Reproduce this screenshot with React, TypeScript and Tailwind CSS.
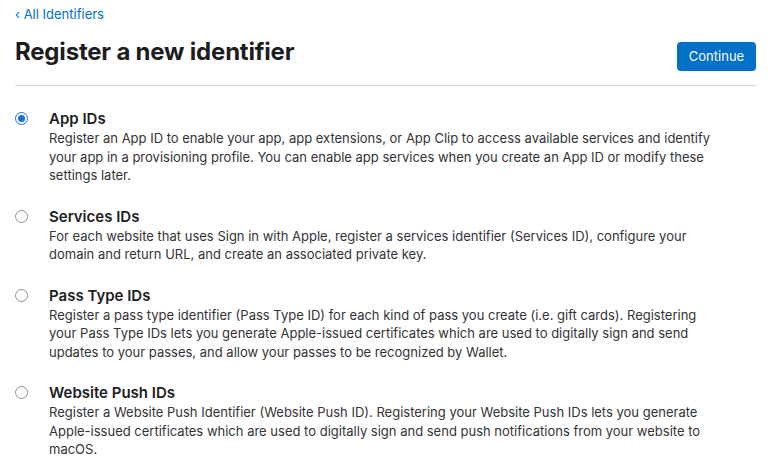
import React, { useState } from "react";

type IdentifierType = {
  id: string;
  title: string;
  lines: string[];
};

const identifierTypes: IdentifierType[] = [
  {
    id: "app",
    title: "App IDs",
    lines: [
      "Register an App ID to enable your app, app extensions, or App Clip to access available services and identify",
      "your app in a provisioning profile. You can enable app services when you create an App ID or modify these",
      "settings later.",
    ],
  },
  {
    id: "services",
    title: "Services IDs",
    lines: [
      "For each website that uses Sign in with Apple, register a services identifier (Services ID), configure your",
      "domain and return URL, and create an associated private key.",
    ],
  },
  {
    id: "pass",
    title: "Pass Type IDs",
    lines: [
      "Register a pass type identifier (Pass Type ID) for each kind of pass you create (i.e. gift cards). Registering",
      "your Pass Type IDs lets you generate Apple-issued certificates which are used to digitally sign and send",
      "updates to your passes, and allow your passes to be recognized by Wallet.",
    ],
  },
  {
    id: "push",
    title: "Website Push IDs",
    lines: [
      "Register a Website Push Identifier (Website Push ID). Registering your Website Push IDs lets you generate",
      "Apple-issued certificates which are used to digitally sign and send push notifications from your website to",
      "macOS.",
    ],
  },
];

// radio circle drawn with plain divs so it looks the same everywhere
const Radio = ({ checked }: { checked: boolean }) => {
  if (checked) {
    return (
      <span className="flex h-[13px] w-[13px] items-center justify-center rounded-full border-[1.5px] border-[#1b6fe0] bg-white">
        <span className="h-[7px] w-[7px] rounded-full bg-[#1b6fe0]" />
      </span>
    );
  }
  return (
    <span className="block h-[13px] w-[13px] rounded-full border border-[#8f8f8f] bg-white" />
  );
};

const App = () => {
  const [selected, setSelected] = useState("app");

  return (
    <div
      className="min-h-screen bg-white pl-[15px] pr-[18px] text-[#1d1d1f]"
      style={{ fontFamily: "Inter, 'Noto Sans', sans-serif" }}
    >
      <a href="#" className="block pt-[5px] text-[13px] leading-[18px] text-[#0070c9]">
        ‹ All Identifiers
      </a>

      {/* header */}
      <div className="mt-[14px] flex items-start justify-between border-b border-[#d6d6d6] pb-[14px]">
        <h1 className="text-[24px] font-bold leading-[30px] tracking-[-0.2px]">
          Register a new identifier
        </h1>
        <button
          type="button"
          className="mt-[5px] h-[29px] w-[79px] rounded-[4px] bg-[#0070c9] text-[13px] text-white"
        >
          Continue
        </button>
      </div>

      {/* identifier choices */}
      <div className="pt-[23px]">
        {identifierTypes.map((item) => (
          <label
            key={item.id}
            className="mb-[22px] flex cursor-pointer items-start"
            onClick={() => setSelected(item.id)}
          >
            <div className="w-[34px] shrink-0 pt-[3px]">
              <Radio checked={selected === item.id} />
            </div>
            <div>
              <div className="text-[15px] font-semibold leading-[20px]">{item.title}</div>
              <p className="text-[13px] leading-[18.5px] text-[#333336]">
                {item.lines.map((line, i) => (
                  <span key={i} className="block whitespace-nowrap">
                    {line}
                  </span>
                ))}
              </p>
            </div>
          </label>
        ))}
      </div>
    </div>
  );
};

export default App;
